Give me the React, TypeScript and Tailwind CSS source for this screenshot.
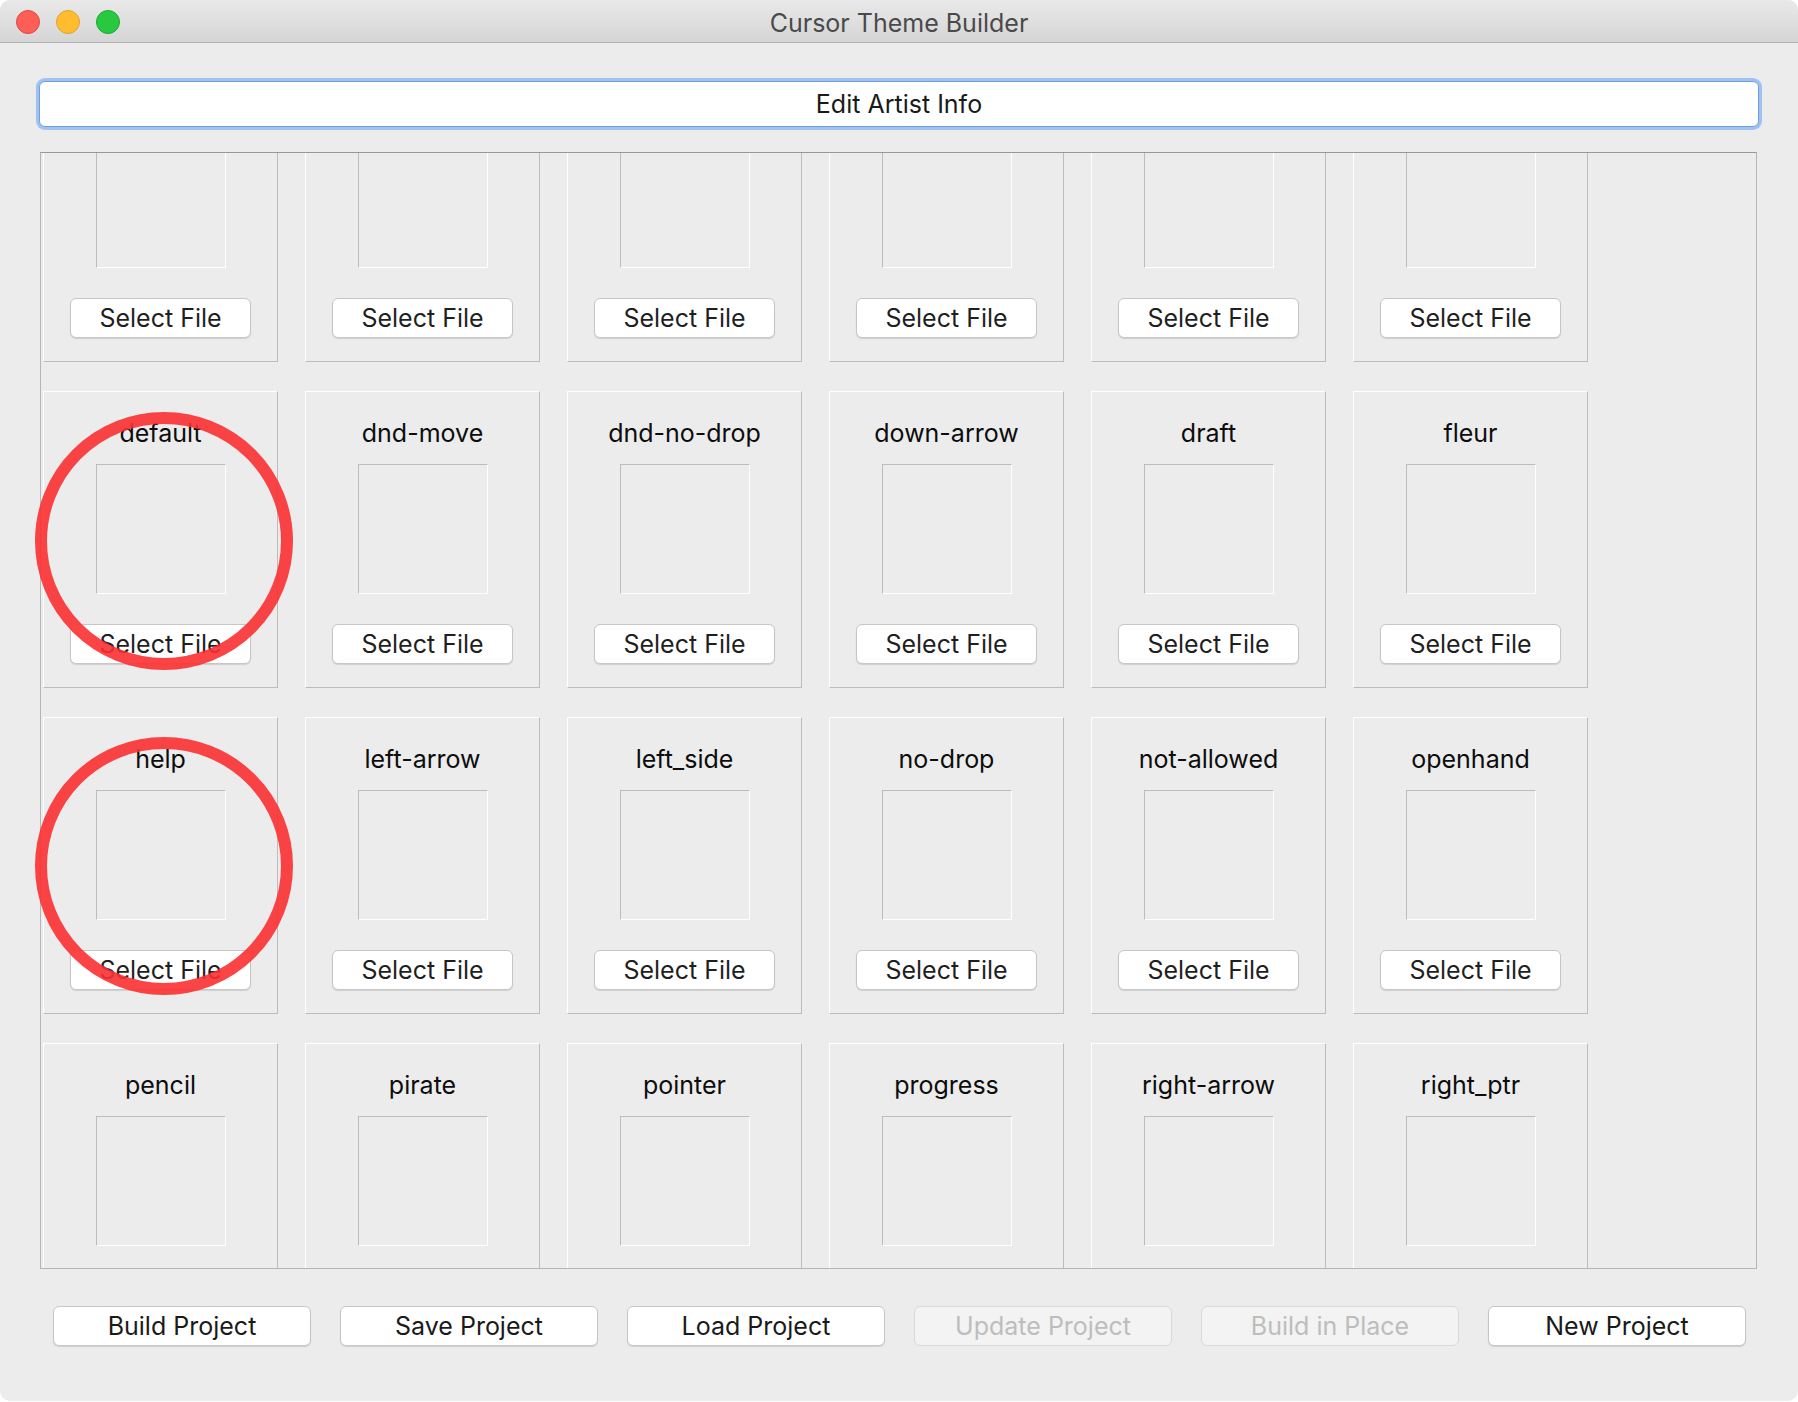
import React from "react";

const rows: string[][] = [
  ["", "", "", "", "", ""],
  ["default", "dnd-move", "dnd-no-drop", "down-arrow", "draft", "fleur"],
  ["help", "left-arrow", "left_side", "no-drop", "not-allowed", "openhand"],
  ["pencil", "pirate", "pointer", "progress", "right-arrow", "right_ptr"],
];

function Cell({ name }: { name: string }) {
  return (
    <div className="flex h-[297px] w-[235px] flex-col items-center border border-t-white border-l-white border-b-[#bcbcbc] border-r-[#bcbcbc]">
      <div className="mt-[26px] h-[30px] text-[25px] leading-[30px] text-[#0d0d0d]">{name}</div>
      <div className="mt-[16px] h-[130px] w-[130px] border border-t-[#bcbcbc] border-l-[#bcbcbc] border-b-white border-r-white" />
      <button className="mt-[30px] h-[40px] w-[181px] rounded-[6px] border border-[#c6c6c6] bg-white text-[25px] leading-[38px] text-[#1f1f1f] shadow-[0_1px_1px_rgba(0,0,0,0.12)]">
        Select File
      </button>
    </div>
  );
}

function BottomButton({ label, disabled }: { label: string; disabled?: boolean }) {
  return (
    <button
      className={
        disabled
          ? "h-[40px] w-[258px] rounded-[6px] border border-[#d9d9d9] bg-[#f3f3f3] text-[25px] leading-[38px] text-[#bdbdbd]"
          : "h-[40px] w-[258px] rounded-[6px] border border-[#c6c6c6] bg-white text-[25px] leading-[38px] text-[#1a1a1a] shadow-[0_1px_1px_rgba(0,0,0,0.12)]"
      }
    >
      {label}
    </button>
  );
}

export default function App() {
  return (
    <div className="h-[1402px] w-[1798px] bg-white font-['Inter',sans-serif]">
      <div className="relative flex h-[1401px] w-[1798px] flex-col overflow-hidden rounded-[10px] bg-[#ececec]">
        {/* Title bar */}
        <div className="relative flex h-[43px] shrink-0 items-center border-b border-[#b3b3b3] bg-gradient-to-b from-[#e9e9e9] to-[#d5d5d5]">
          <div className="absolute left-[16px] top-[10px] flex gap-[16px]">
            <div className="h-[24px] w-[24px] rounded-full border border-[#df4744] bg-[#fd5f57]" />
            <div className="h-[24px] w-[24px] rounded-full border border-[#dea236] bg-[#febc2e]" />
            <div className="h-[24px] w-[24px] rounded-full border border-[#1aab2b] bg-[#28c840]" />
          </div>
          <div className="mt-[4px] w-full text-center text-[25px] leading-[30px] text-[#4a4a4a]">Cursor Theme Builder</div>
        </div>

        {/* Edit Artist Info */}
        <div className="px-[39px] pt-[38px]">
          <button className="h-[46px] w-full rounded-[6px] border border-[#6f9fe3] bg-white text-[25px] leading-[44px] text-[#1a1a1a] shadow-[0_0_0_3px_#a0c2f1]">
            Edit Artist Info
          </button>
        </div>

        {/* Panel */}
        <div className="ml-[40px] mt-[25px] h-[1117px] w-[1717px] overflow-hidden border border-[#b5b5b5] border-t-[#989898]">
          <div className="-mt-[88px] grid grid-cols-[repeat(6,235px)] gap-x-[27px] gap-y-[29px] pl-[2px]">
            {rows.flat().map((n, i) => (
              <Cell key={i} name={n} />
            ))}
          </div>
        </div>

        {/* Bottom buttons */}
        <div className="ml-[53px] mt-[37px] flex gap-[29px]">
          <BottomButton label="Build Project" />
          <BottomButton label="Save Project" />
          <BottomButton label="Load Project" />
          <BottomButton label="Update Project" disabled />
          <BottomButton label="Build in Place" disabled />
          <BottomButton label="New Project" />
        </div>

        {/* Red annotation circles */}
        <div className="pointer-events-none absolute left-[35px] top-[412px] h-[258px] w-[258px] rounded-full border-[12px] border-[rgba(250,48,50,0.9)]" />
        <div className="pointer-events-none absolute left-[35px] top-[737px] h-[258px] w-[258px] rounded-full border-[12px] border-[rgba(250,48,50,0.9)]" />
      </div>
    </div>
  );
}
